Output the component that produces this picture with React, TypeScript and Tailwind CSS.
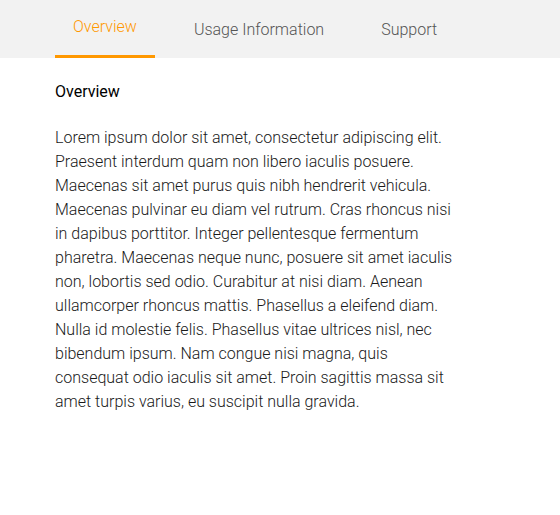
const tabs = ['Overview', 'Usage Information', 'Support'];

const body =
  'Lorem ipsum dolor sit amet, consectetur adipiscing elit. Praesent interdum quam non libero iaculis posuere. Maecenas sit amet purus quis nibh hendrerit vehicula. Maecenas pulvinar eu diam vel rutrum. Cras rhoncus nisi in dapibus porttitor. Integer pellentesque fermentum pharetra. Maecenas neque nunc, posuere sit amet iaculis non, lobortis sed odio. Curabitur at nisi diam. Aenean ullamcorper rhoncus mattis. Phasellus a eleifend diam. Nulla id molestie felis. Phasellus vitae ultrices nisl, nec bibendum ipsum. Nam congue nisi magna, quis consequat odio iaculis sit amet. Proin sagittis massa sit amet turpis varius, eu suscipit nulla gravida.';

export default function App() {
  const active = 0;
  return (
    <div className="min-h-[515px] bg-white font-['Roboto',sans-serif]">
      <div className="flex h-[58px] gap-[21px] bg-[#f2f2f2] pl-[55px]">
        {tabs.map((t, i) => (
          <div
            key={t}
            className={
              i === active
                ? 'flex items-center border-b-[3px] border-[#ff9800] px-[18px] pb-[2px] text-[16px] font-light text-[#ff9800]'
                : 'flex items-center px-[18px] pt-[1px] text-[16px] font-light text-[#555]'
            }
          >
            {t}
          </div>
        ))}
      </div>
      <div className="px-[55px] pt-[22px]">
        <h2 className="text-[16px] leading-[24px] font-normal text-black">Overview</h2>
        <p className="mt-[22px] w-[400px] text-[16px] leading-[24px] font-light text-[#1a1a1a]">{body}</p>
      </div>
    </div>
  );
}
